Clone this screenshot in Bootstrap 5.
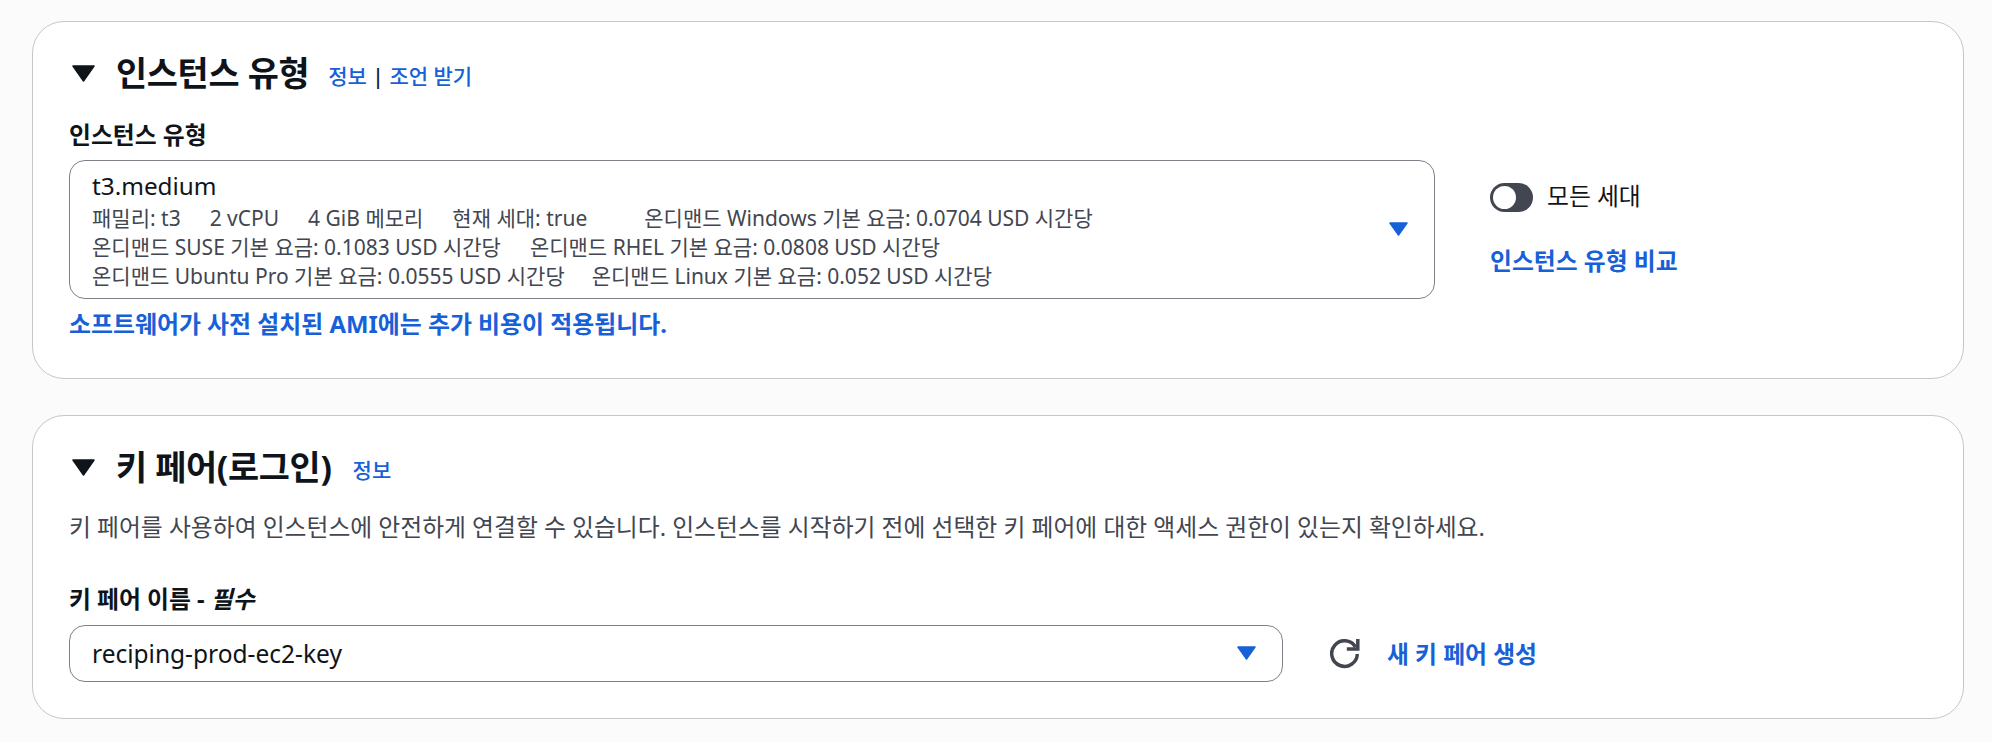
<!DOCTYPE html>
<html lang="ko">
<head>
  <meta charset="UTF-8" />
  <title>인스턴스 유형</title>
  <link href="https://cdn.jsdelivr.net/npm/bootstrap@5.3.0/dist/css/bootstrap.min.css" rel="stylesheet">
  <style>
    body {
      font-family: "Noto Sans", "Noto Sans CJK KR", sans-serif;
      background-color: #fbfbfc;
      color: #0f141a;
      font-size: 23.800px;
      padding: 21px 28px 0 32px;
    }
    .panel-box {
      background-color: #fff;
      border: 1px solid #c6c6cd;
      border-radius: 32px;
      padding: 29px 36px 0 36px;
    }
    .panel-one { height: 358px; margin-bottom: 36px; }
    .panel-two { height: 304px; }
    .panel-head { height: 44px; }
    .panel-title { font-size: 33.800px; font-weight: 700; margin: 0 0 0 21px; line-height: 44px; letter-spacing: -0.3px; }
    .caret-big { width: 23px; height: 17px; flex: none; margin-left: 3px; }
    .info-links { font-size: 21px; font-weight: 500; margin-left: 19px; padding-top: 8px; }
    .panel-two .info-links { margin-left: 21px; }
    .blue-link { color: #1760d8; text-decoration: none; }
    .strong-link { font-weight: 700; font-size: 23.800px; line-height: 28px; }
    .ami-link { margin-top: 11px; font-size: 23.900px; }
    .field-label { font-size: 23.800px; font-weight: 700; line-height: 28px; }
    .type-label { margin-top: 26px; margin-bottom: 11px; }
    .key-label { margin-top: 43px; margin-bottom: 12px; }
    .select-box {
      border: 1px solid #808088;
      border-radius: 16px;
      position: relative;
      padding-left: 22px;
      background: #fff;
    }
    .select-type { width: 1366px; height: 139px; padding-top: 7px; }
    .select-key { width: 1214px; height: 57px; line-height: 55px; font-size: 24.500px; }
    .type-name { font-size: 24.300px; line-height: 36px; }
    .type-line { font-size: 21px; line-height: 29px; color: #424650; white-space: nowrap; gap: 29px; }
    .type-line-tight { gap: 27px; }
    .wide-after { margin-right: 28px; }
    .caret-blue { position: absolute; width: 19px; height: 14px; }
    .select-type .caret-blue { right: 26px; top: 61px; }
    .select-key .caret-blue { right: 26px; top: 20px; }
    .side-col { margin-left: 55px; padding-top: 20px; }
    .toggle-row { gap: 14px; height: 34px; margin-bottom: 33px; }
    .toggle-pill { width: 43px; height: 29px; background: #424650; border-radius: 15px; position: relative; }
    .toggle-pill::after { content: ""; position: absolute; left: 3px; top: 3px; width: 23px; height: 23px; border-radius: 50%; background: #fff; }
    .key-desc { color: #424650; line-height: 30px; margin-top: 23px; }
    .refresh-icon { margin-left: 47px; margin-right: 27px; flex: none; }
  </style>
</head>
<body>
  <section class="panel-box panel-one">
    <div class="panel-head d-flex align-items-center">
      <svg class="caret-big" viewBox="0 0 23 17"><path d="M1 1h21L11.500 16z" fill="#0f141a" stroke="#0f141a" stroke-width="1.500" stroke-linejoin="round"/></svg>
      <h2 class="panel-title">인스턴스 유형</h2>
      <div class="info-links"><a class="blue-link" href="#">정보</a> | <a class="blue-link" href="#">조언 받기</a></div>
    </div>
    <div class="field-label type-label">인스턴스 유형</div>
    <div class="d-flex">
      <div class="select-box select-type">
        <div class="type-name">t3.medium</div>
        <div class="type-line d-flex">
          <span>패밀리: t3</span><span>2 vCPU</span><span>4 GiB 메모리</span><span class="wide-after">현재 세대: true</span><span>온디맨드 Windows 기본 요금: 0.0704 USD 시간당</span>
        </div>
        <div class="type-line d-flex">
          <span>온디맨드 SUSE 기본 요금: 0.1083 USD 시간당</span><span>온디맨드 RHEL 기본 요금: 0.0808 USD 시간당</span>
        </div>
        <div class="type-line type-line-tight d-flex">
          <span>온디맨드 Ubuntu Pro 기본 요금: 0.0555 USD 시간당</span><span>온디맨드 Linux 기본 요금: 0.052 USD 시간당</span>
        </div>
        <svg class="caret-blue" viewBox="0 0 19 14"><path d="M1 1h17L9.500 13z" fill="#1760d8" stroke="#1760d8" stroke-width="1.500" stroke-linejoin="round"/></svg>
      </div>
      <div class="side-col d-flex flex-column">
        <div class="toggle-row d-flex align-items-center">
          <div class="toggle-pill"></div>
          <span>모든 세대</span>
        </div>
        <a class="blue-link strong-link" href="#">인스턴스 유형 비교</a>
      </div>
    </div>
    <a class="blue-link strong-link ami-link d-block" href="#">소프트웨어가 사전 설치된 AMI에는 추가 비용이 적용됩니다.</a>
  </section>

  <section class="panel-box panel-two">
    <div class="panel-head d-flex align-items-center">
      <svg class="caret-big" viewBox="0 0 23 17"><path d="M1 1h21L11.500 16z" fill="#0f141a" stroke="#0f141a" stroke-width="1.500" stroke-linejoin="round"/></svg>
      <h2 class="panel-title">키 페어(로그인)</h2>
      <div class="info-links"><a class="blue-link" href="#">정보</a></div>
    </div>
    <div class="key-desc">키 페어를 사용하여 인스턴스에 안전하게 연결할 수 있습니다. 인스턴스를 시작하기 전에 선택한 키 페어에 대한 액세스 권한이 있는지 확인하세요.</div>
    <div class="field-label key-label">키 페어 이름 - <em>필수</em></div>
    <div class="d-flex align-items-center">
      <div class="select-box select-key">
        reciping-prod-ec2-key
        <svg class="caret-blue" viewBox="0 0 19 14"><path d="M1 1h17L9.500 13z" fill="#1760d8" stroke="#1760d8" stroke-width="1.500" stroke-linejoin="round"/></svg>
      </div>
      <svg class="refresh-icon" width="30" height="30" viewBox="0 0 30 30" fill="none" stroke="#424650" stroke-width="3.500"><path d="M25.500 8A12.800 12.800 0 1 0 27.300 15"/><path d="M27.800 0v10h-11"/></svg>
      <a class="blue-link strong-link" href="#">새 키 페어 생성</a>
    </div>
  </section>
  <script src="https://cdn.jsdelivr.net/npm/bootstrap@5.3.0/dist/js/bootstrap.bundle.min.js"></script>
</body>
</html>
